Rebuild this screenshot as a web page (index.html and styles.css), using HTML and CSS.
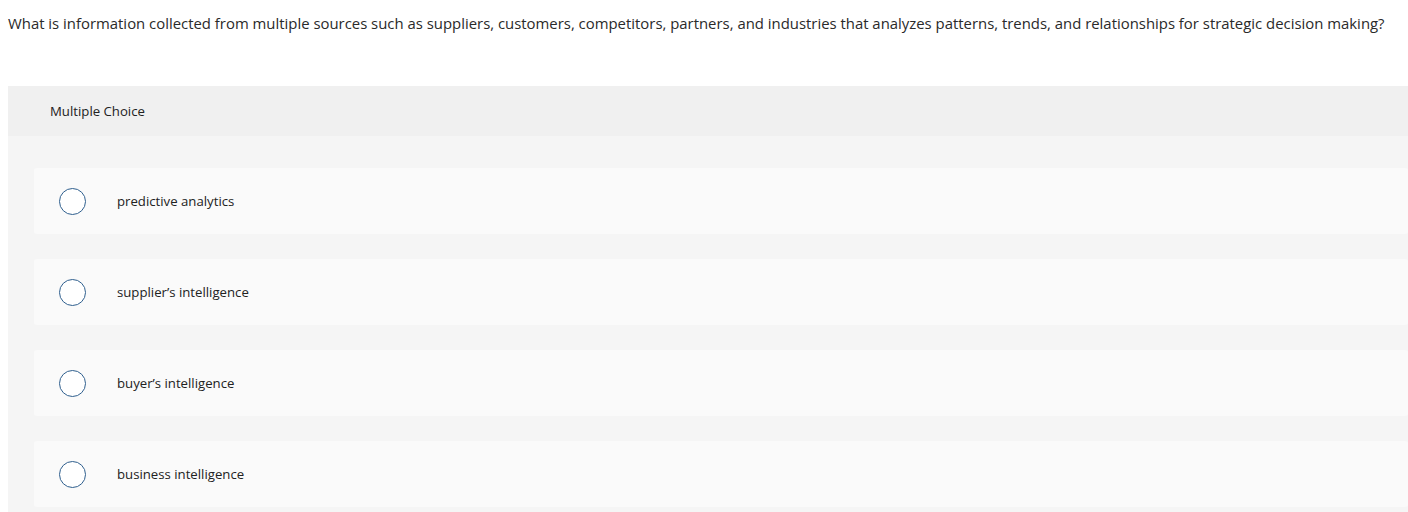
FILE: index.html
```html
<!DOCTYPE html>
<html>
<head>
<meta charset="utf-8">
<link rel="stylesheet" href="styles.css">
</head>
<body>
<p class="question">What is information collected from multiple sources such as suppliers, customers, competitors, partners, and industries that analyzes patterns, trends, and relationships for strategic decision making?</p>
<section class="panel">
  <header class="panel-head">Multiple Choice</header>
  <div class="choices">
    <label class="choice"><span class="radio"></span><span class="choice-text">predictive analytics</span></label>
    <label class="choice"><span class="radio"></span><span class="choice-text">supplier’s intelligence</span></label>
    <label class="choice"><span class="radio"></span><span class="choice-text">buyer’s intelligence</span></label>
    <label class="choice"><span class="radio"></span><span class="choice-text">business intelligence</span></label>
  </div>
</section>
</body>
</html>
```
FILE: styles.css
```css
html, body {
  margin: 0;
  padding: 0;
  background: #fff;
}
body {
  padding: 0 0 0 8px;
  font-family: "Open Sans", "Liberation Sans", sans-serif;
  color: #2b2b2b;
  overflow: hidden;
}
.question {
  margin: 0;
  padding-top: 13px;
  height: 86px;
  box-sizing: border-box;
  font-size: 14.9px;
  line-height: 20px;
  color: #2a2a2a;
  white-space: nowrap;
}
.panel {
  background: #f5f5f5;
  padding-bottom: 20px;
}
.panel-head {
  background: #f0f0f0;
  height: 50px;
  display: flex;
  align-items: center;
  padding-left: 42px;
  font-size: 13.2px;
  color: #222;
}
.choices {
  display: flex;
  flex-direction: column;
  gap: 25px;
  padding: 32px 0 0 26px;
}
.choice {
  display: flex;
  align-items: center;
  height: 66px;
  background: #fafafa;
  border-radius: 3px;
  padding-left: 25px;
}
.radio {
  width: 25px;
  height: 25px;
  border: 1.5px solid #2f5f8e;
  border-radius: 50%;
  background: #fff;
  flex: none;
}
.choice-text {
  margin-left: 31px;
  font-size: 13.2px;
  color: #222;
}
```
